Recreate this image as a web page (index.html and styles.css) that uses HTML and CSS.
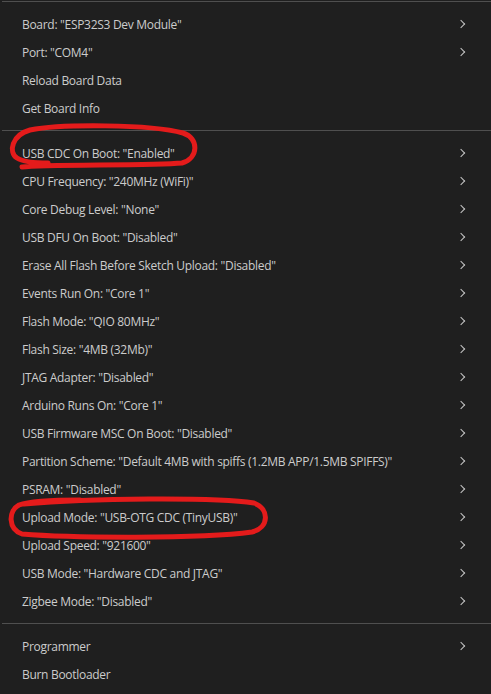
FILE: index.html
```html
<!DOCTYPE html>
<html>
<head>
<meta charset="utf-8">
<link rel="stylesheet" href="styles.css">
</head>
<body>
<div class="menu">
  <div class="sep top"></div>
  <div class="section">
    <div class="item"><span>Board: "ESP32S3 Dev Module"</span><i class="chev"></i></div>
    <div class="item"><span>Port: "COM4"</span><i class="chev"></i></div>
    <div class="item"><span>Reload Board Data</span></div>
    <div class="item"><span>Get Board Info</span></div>
  </div>
  <div class="sep"></div>
  <div class="section">
    <div class="item"><span>USB CDC On Boot: "Enabled"</span><i class="chev"></i></div>
    <div class="item"><span>CPU Frequency: "240MHz (WiFi)"</span><i class="chev"></i></div>
    <div class="item"><span>Core Debug Level: "None"</span><i class="chev"></i></div>
    <div class="item"><span>USB DFU On Boot: "Disabled"</span><i class="chev"></i></div>
    <div class="item"><span>Erase All Flash Before Sketch Upload: "Disabled"</span><i class="chev"></i></div>
    <div class="item"><span>Events Run On: "Core 1"</span><i class="chev"></i></div>
    <div class="item"><span>Flash Mode: "QIO 80MHz"</span><i class="chev"></i></div>
    <div class="item"><span>Flash Size: "4MB (32Mb)"</span><i class="chev"></i></div>
    <div class="item"><span>JTAG Adapter: "Disabled"</span><i class="chev"></i></div>
    <div class="item"><span>Arduino Runs On: "Core 1"</span><i class="chev"></i></div>
    <div class="item"><span>USB Firmware MSC On Boot: "Disabled"</span><i class="chev"></i></div>
    <div class="item"><span>Partition Scheme: "Default 4MB with spiffs (1.2MB APP/1.5MB SPIFFS)"</span><i class="chev"></i></div>
    <div class="item"><span>PSRAM: "Disabled"</span><i class="chev"></i></div>
    <div class="item"><span>Upload Mode: "USB-OTG CDC (TinyUSB)"</span><i class="chev"></i></div>
    <div class="item"><span>Upload Speed: "921600"</span><i class="chev"></i></div>
    <div class="item"><span>USB Mode: "Hardware CDC and JTAG"</span><i class="chev"></i></div>
    <div class="item"><span>Zigbee Mode: "Disabled"</span><i class="chev"></i></div>
  </div>
  <div class="sep"></div>
  <div class="section">
    <div class="item"><span>Programmer</span><i class="chev"></i></div>
    <div class="item"><span>Burn Bootloader</span></div>
  </div>
</div>
<svg class="marks" width="491" height="694" viewBox="0 0 491 694">
  <path d="M22 167 C 45 164, 150 166, 182 163 C 199 158, 199 138, 183 133 C 150 124, 60 124, 30 130 C 12 135, 8 152, 17 158 C 23 162, 35 163, 48 163" />
  <path d="M24 504 C 90 498, 215 497, 254 503 C 270 509, 269 528, 252 532 C 200 539, 70 538, 22 534 C 8 529, 8 511, 19 505 C 30 501, 60 500, 80 500" />
</svg>
</body>
</html>
```

FILE: styles.css
```css
html, body {
  margin: 0;
  padding: 0;
  background: #1f1f1f;
}
body {
  width: 491px;
  height: 694px;
  overflow: hidden;
  position: relative;
  font-family: "Open Sans", "Noto Sans", sans-serif;
  font-size: 12px;
  letter-spacing: -0.3px;
  color: #cccccc;
}
.menu {
  display: flex;
  flex-direction: column;
}
.sep {
  height: 1px;
  background: #4f4f4f;
  margin: 8px 0 8px 2px;
}
.sep.top {
  margin: 1px 0 8px 2px;
}
.section {
  display: flex;
  flex-direction: column;
}
.item {
  height: 28px;
  display: flex;
  align-items: center;
  justify-content: space-between;
  padding: 0 26px 0 22px;
  white-space: nowrap;
}
.chev {
  width: 5px;
  height: 8px;
  position: relative;
}
.chev::before {
  content: "";
  position: absolute;
  left: -2px;
  top: 1px;
  width: 5px;
  height: 5px;
  border-right: 1.4px solid #c5c5c5;
  border-top: 1.4px solid #c5c5c5;
  transform: rotate(45deg);
}
.marks {
  position: absolute;
  left: 0;
  top: 0;
  pointer-events: none;
}
.marks path {
  fill: none;
  stroke: #e41b1b;
  stroke-width: 5;
  stroke-linecap: round;
  stroke-linejoin: round;
}
```
